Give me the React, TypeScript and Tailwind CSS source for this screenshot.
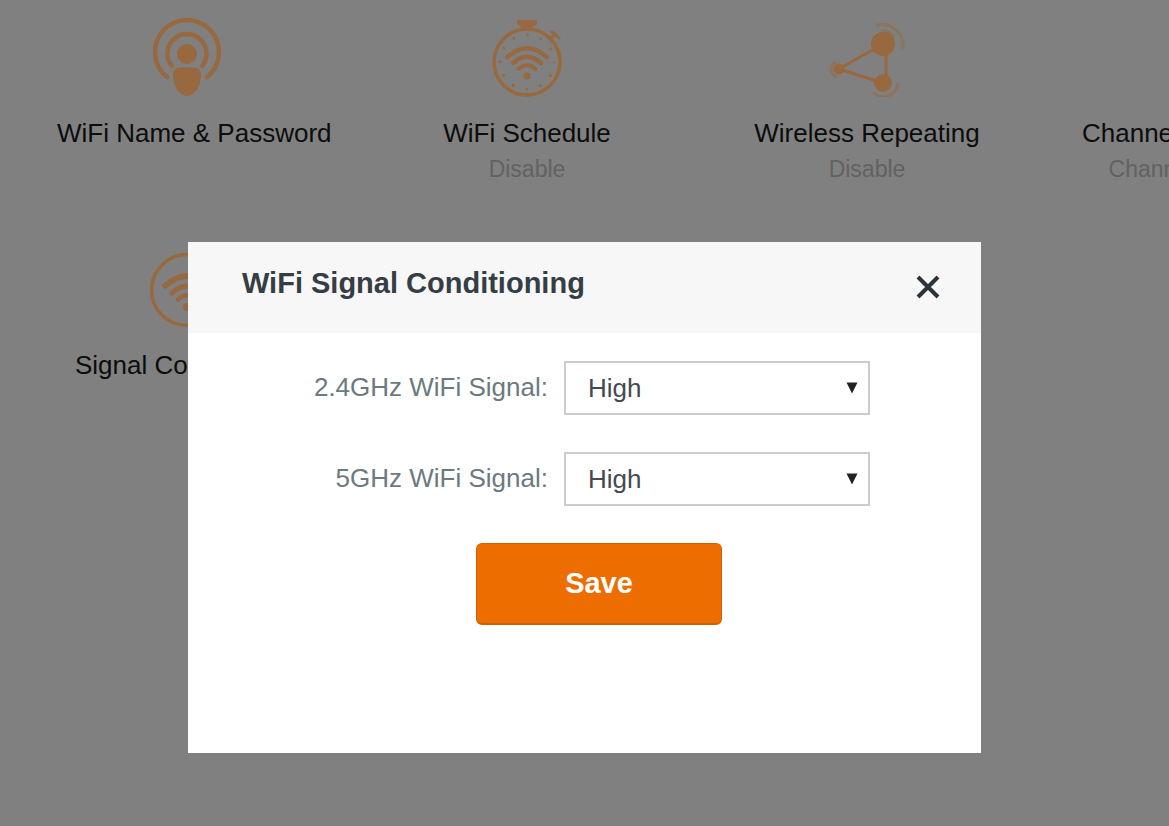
import { useState } from 'react';
import type { ReactNode } from 'react';

type Feature = {
  title: string;
  status?: string;
  icon: ReactNode;
};

function WifiNameIcon() {
  return (
    <svg viewBox="0 0 80 80" className="h-20 w-20" fill="none" stroke="currentColor" strokeLinecap="round">
      <path d="M20 60A32 32 0 1 1 60 60" strokeWidth="4.5" />
      <path d="M25 49A19.5 19.5 0 1 1 55 49" strokeWidth="4.5" />
      <circle cx="40" cy="37" r="10" fill="currentColor" stroke="none" />
      <path
        d="M33 50.5h14q7 0 7 7.500C54 69 48 79 40 79S26 69 26 58q0-7.500 7-7.500z"
        fill="currentColor"
        stroke="none"
      />
    </svg>
  );
}

function ScheduleIcon() {
  return (
    <svg viewBox="0 0 80 80" className="h-20 w-20" fill="none" stroke="currentColor">
      <circle cx="40" cy="45" r="33" strokeWidth="3.5" />
      <circle cx="40" cy="45" r="27" strokeWidth="2.5" strokeDasharray="2.5 11.637" strokeDashoffset="1.25" />
      <path d="M30 3h20v4l-6 4h-8l-6-4z" fill="currentColor" stroke="none" />
      <path d="M62 23l7-7M64 14l9 8" strokeWidth="3" />
      <path d="M20.5 40Q40 22.500 59.5 40" strokeWidth="4.5" strokeLinecap="round" />
      <path d="M26 46Q40 33.500 54 46" strokeWidth="4.5" strokeLinecap="round" />
      <path d="M31.5 52Q40 44.500 48.5 52" strokeWidth="4" strokeLinecap="round" />
      <circle cx="40" cy="59" r="3.5" fill="currentColor" stroke="none" />
    </svg>
  );
}

function RepeatingIcon() {
  return (
    <svg viewBox="0 0 80 80" className="h-20 w-20" fill="none" stroke="currentColor">
      <path d="M56 27L12 52l44 14M59 29v36" strokeWidth="3" />
      <circle cx="56" cy="27" r="12" fill="currentColor" stroke="none" />
      <circle cx="12" cy="52" r="5.5" fill="currentColor" stroke="none" />
      <circle cx="56" cy="66" r="9" fill="currentColor" stroke="none" />
      <g opacity="0.5" strokeWidth="3">
        <path d="M49 8.500Q60 5 69 13T76 32" />
        <path d="M54 14Q62 13 67 20" />
        <path d="M9 45A8 8 0 0 0 10 60" />
        <path d="M46 75A14.5 14.5 0 0 0 71 66" />
      </g>
    </svg>
  );
}

function SignalIcon() {
  return (
    <svg viewBox="0 0 80 80" className="h-20 w-20" fill="none" stroke="currentColor">
      <circle cx="40" cy="41" r="35.5" strokeWidth="3.5" />
      <path d="M18 37Q40 17 62 37" strokeWidth="5.5" strokeLinecap="round" />
      <path d="M25 44Q40 30 55 44" strokeWidth="5" strokeLinecap="round" />
      <path d="M31 50.5Q40 42 49 50.500" strokeWidth="4.5" strokeLinecap="round" />
      <circle cx="40" cy="58" r="4" fill="currentColor" stroke="none" />
    </svg>
  );
}

const features: Feature[] = [
  { title: 'WiFi Name & Password', icon: <WifiNameIcon /> },
  { title: 'WiFi Schedule', status: 'Disable', icon: <ScheduleIcon /> },
  { title: 'Wireless Repeating', status: 'Disable', icon: <RepeatingIcon /> },
  { title: 'Channel & Bandwidth', status: 'Channel 36/80MHz', icon: <SignalIcon /> },
  { title: 'Signal Conditioning', icon: <SignalIcon /> },
];

function SignalSelect({ id, label }: { id: string; label: string }) {
  const [value, setValue] = useState('High');

  return (
    <div className="flex items-center gap-4">
      <label htmlFor={id} className="w-[360px] shrink-0 pb-0.5 text-right text-[26px] leading-8 text-[#6b7a80]">
        {label}
      </label>
      <div className="relative w-[306px]">
        <select
          id={id}
          value={value}
          onChange={(e) => setValue(e.target.value)}
          className="h-[54px] w-full appearance-none border-2 border-[#cccccc] bg-white px-[22px] text-[26px] text-[#434a50]"
        >
          <option>High</option>
          <option>Medium</option>
          <option>Low</option>
        </select>
        <svg viewBox="0 0 12 12" className="pointer-events-none absolute inset-y-0 right-3 my-auto h-3 w-3" fill="#222">
          <path d="M0.5 0.500h11L6 11.500z" />
        </svg>
      </div>
    </div>
  );
}

export default function App() {
  const [open, setOpen] = useState(true);

  return (
    <div className="min-h-screen overflow-hidden bg-[#808080] font-['Liberation_Sans',Arial,sans-serif]">
      <main className="grid grid-cols-[repeat(4,260px)] gap-x-20 gap-y-12 pt-[17px] pl-[57px]">
        {features.map((feature) => (
          <a key={feature.title} href="#" className="flex min-h-[184px] flex-col text-center whitespace-nowrap">
            <span className="self-center text-[#98683e]">{feature.icon}</span>
            <span className="mt-5 text-[26px] leading-8 text-[#0c0c0c]">{feature.title}</span>
            {feature.status && <span className="mt-1 text-[23px] leading-8 text-[#626262]">{feature.status}</span>}
          </a>
        ))}
      </main>

      {open && (
        <div className="fixed inset-0 flex items-start justify-center pt-[242px]">
          <div role="dialog" aria-labelledby="dialog-title" className="w-full max-w-[793px] bg-white pb-32">
            <header className="flex h-[91px] items-center justify-between bg-[#f7f7f7] pr-10 pb-0.5 pl-[54px]">
              <h2 id="dialog-title" className="pb-2 text-[29px] leading-9 font-bold text-[#353d45]">
                WiFi Signal Conditioning
              </h2>
              <button type="button" aria-label="Close" onClick={() => setOpen(false)} className="text-[#2b343c]">
                <svg viewBox="0 0 26 26" className="h-[26px] w-[26px]" stroke="currentColor" strokeWidth="4">
                  <path d="M3 3l20 20M23 3L3 23" />
                </svg>
              </button>
            </header>

            <form onSubmit={(e) => e.preventDefault()} className="flex flex-col gap-[37px] pt-7">
              <SignalSelect id="signal-24" label="2.4GHz WiFi Signal:" />
              <SignalSelect id="signal-5" label="5GHz WiFi Signal:" />
              <button
                type="submit"
                className="ml-[288px] h-[82px] w-[246px] rounded-md border border-b-2 border-[#d06000] bg-[#ed6d00] text-[29px] font-bold text-white"
              >
                Save
              </button>
            </form>
          </div>
        </div>
      )}
    </div>
  );
}
